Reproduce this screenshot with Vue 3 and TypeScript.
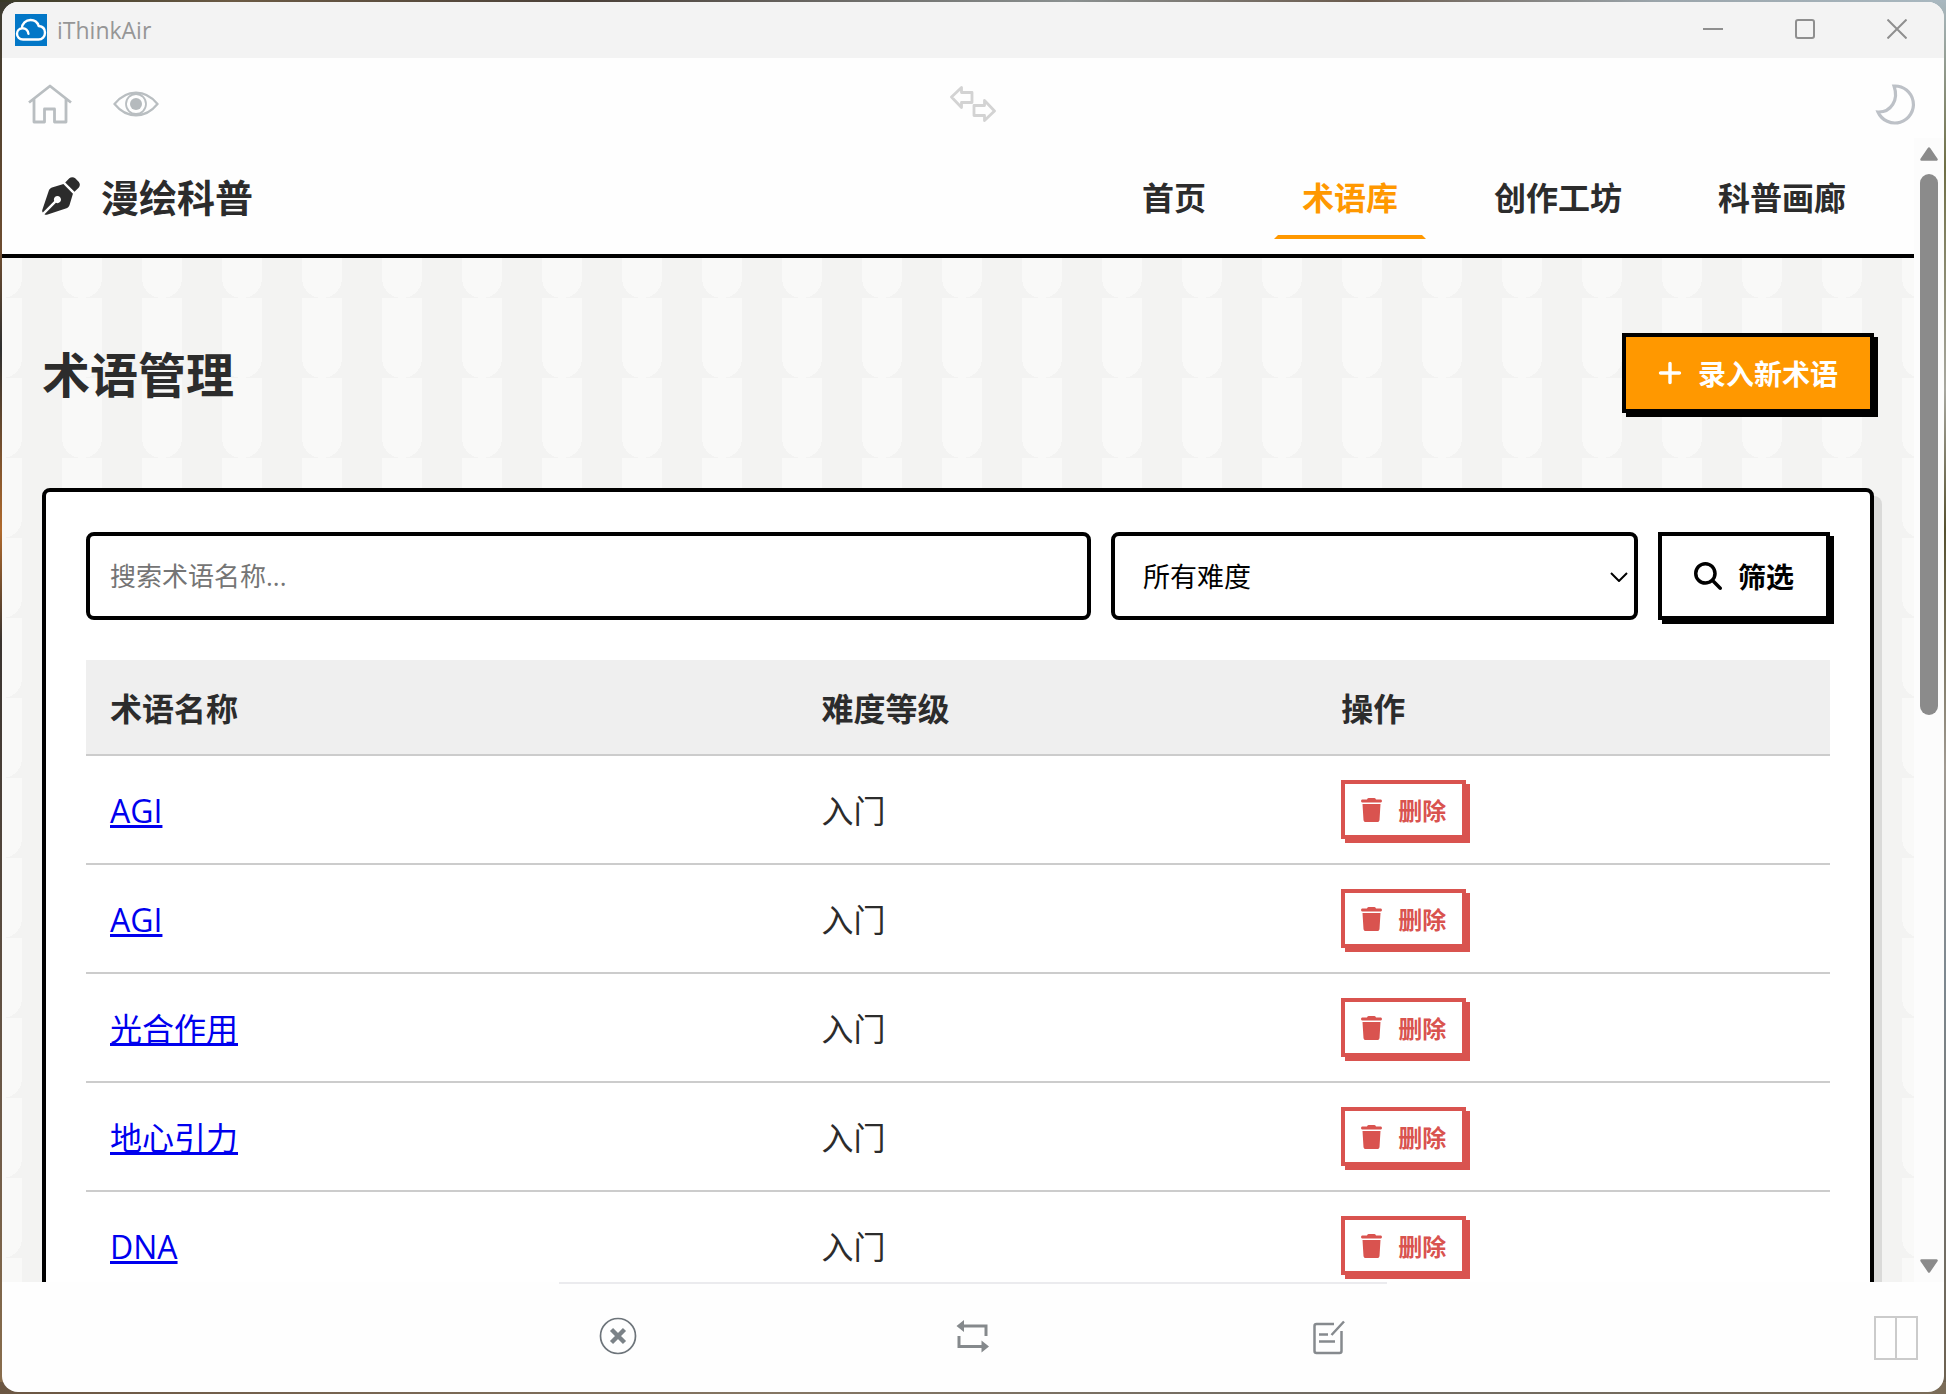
<script setup lang="ts">
import { ref } from 'vue'

interface Term {
  id: number
  name: string
  level: string
}

interface NavItem {
  label: string
  active?: boolean
}

const navItems: NavItem[] = [
  { label: '首页' },
  { label: '术语库', active: true },
  { label: '创作工坊' },
  { label: '科普画廊' },
]

const terms = ref<Term[]>([
  { id: 1, name: 'AGI', level: '入门' },
  { id: 2, name: 'AGI', level: '入门' },
  { id: 3, name: '光合作用', level: '入门' },
  { id: 4, name: '地心引力', level: '入门' },
  { id: 5, name: 'DNA', level: '入门' },
])

const keyword = ref('')
const level = ref('')

function removeTerm(id: number) {
  terms.value = terms.value.filter((t) => t.id !== id)
}
</script>

<template>
  <div class="desktop">
    <div class="window">
      <div class="titlebar">
        <svg class="app-icon" viewBox="0 0 32 32" aria-hidden="true">
          <rect width="32" height="32" fill="#0277c7" />
          <path
            d="M8 25.500C4.500 25.500 2 23 2 19.800C2 16.800 4.200 14.600 7 14.300C7 9.500 10.800 6 15.500 6C19.500 6 22.600 8.300 23.700 12C27.600 12.400 30 15 30 18.700C30 22.600 27.200 25.500 23.500 25.500ZM7 14.300C10.500 14 13.200 16.400 13.400 19.800"
            fill="none" stroke="#fff" stroke-width="2.400" stroke-linecap="round"
          />
        </svg>
        <span class="app-name">iThinkAir</span>
        <div class="window-controls">
          <button type="button" aria-label="最小化">
            <svg viewBox="0 0 20 20"><path d="M0 10H20" /></svg>
          </button>
          <button type="button" aria-label="最大化">
            <svg viewBox="0 0 20 20"><rect x="1" y="1" width="18" height="18" rx="2" /></svg>
          </button>
          <button type="button" aria-label="关闭">
            <svg viewBox="0 0 20 20"><path d="M0.500 0.500L19.500 19.500M19.500 0.500L0.500 19.500" /></svg>
          </button>
        </div>
      </div>

      <div class="toolbar">
        <div class="tools">
          <button type="button" aria-label="主页">
            <svg width="46" height="40" viewBox="0 0 46 40">
              <path d="M2 18.500L23 2L44 18.500M7 15V38H17.500V25H27.500V38H39V15" stroke="#b9bec1" stroke-width="2.800" fill="none" stroke-linejoin="round" />
            </svg>
          </button>
          <button type="button" aria-label="预览">
            <svg width="46" height="26" viewBox="0 0 46 26">
              <path d="M1.500 13C8 5 15 1.700 23 1.700S38 5 44.500 13C38 21 31 24.300 23 24.300S8 21 1.500 13Z" fill="none" stroke="#b9bec1" stroke-width="2.200" />
              <circle cx="23" cy="13" r="10" fill="none" stroke="#b9bec1" stroke-width="1.800" />
              <circle cx="23" cy="13" r="6" fill="#b5babd" />
            </svg>
          </button>
        </div>
        <button type="button" aria-label="切换">
          <svg width="46" height="36" viewBox="0 0 46 36">
            <path d="M1.500 11L11.500 1.500V6.500H22V16.500H11.500V21.500ZM44.500 25L34.500 34.500V29.500H24V19.500H34.500V14.500Z" fill="none" stroke="#d3d3d3" stroke-width="2.800" stroke-linejoin="round" />
          </svg>
        </button>
        <button type="button" aria-label="夜间模式">
          <svg width="44" height="46" viewBox="0 -2 44 46">
            <path d="M20 3A18.500 18.500 0 1 1 4 29C17 29.500 25 17 20 3Z" fill="none" stroke="#bdc1c7" stroke-width="3.200" />
          </svg>
        </button>
      </div>

      <div class="viewport">
        <div class="page">
          <header class="site-header">
            <a class="brand" href="#">
              <svg class="brand-icon" viewBox="0 0 512 512" aria-hidden="true">
                <path fill="currentColor" d="M368.400 18.300L312.700 74.100 437.900 199.300l55.700-55.700c21.900-21.900 21.900-57.300 0-79.200L447.600 18.300c-21.900-21.900-57.300-21.900-79.200 0zM288 94.600l-9.200 2.800L134.700 140.600c-19.900 6-35.700 21.200-42.300 41L3.800 445.800c-3.800 11.300-1 23.900 7.300 32.400L164.700 324.700c-3-6.300-4.700-13.300-4.700-20.700c0-26.500 21.500-48 48-48s48 21.500 48 48s-21.500 48-48 48c-7.400 0-14.400-1.700-20.700-4.700L33.700 500.900c8.600 8.300 21.100 11.200 32.400 7.300l264.300-88.600c19.700-6.600 35-22.400 41-42.300l43.200-144.100 2.800-9.200L288 94.600z" />
              </svg>
              <span>漫绘科普</span>
            </a>
            <nav class="site-nav">
              <a v-for="item in navItems" :key="item.label" href="#" :class="{ active: item.active }">{{ item.label }}</a>
            </nav>
          </header>

          <main class="content">
            <div class="page-head">
              <h1>术语管理</h1>
              <button type="button" class="btn btn-primary">
                <svg width="24" height="28" viewBox="0 0 448 512" aria-hidden="true">
                  <path fill="currentColor" d="M256 80c0-17.700-14.300-32-32-32s-32 14.300-32 32V224H48c-17.700 0-32 14.300-32 32s14.300 32 32 32H192V432c0 17.700 14.300 32 32 32s32-14.300 32-32V288H400c17.700 0 32-14.300 32-32s-14.300-32-32-32H256V80z" />
                </svg>
                <span>录入新术语</span>
              </button>
            </div>

            <section class="card">
              <form class="filters" @submit.prevent>
                <input v-model="keyword" type="text" placeholder="搜索术语名称..." aria-label="搜索术语名称" />
                <div class="select-wrap">
                  <select v-model="level" aria-label="难度">
                    <option value="">所有难度</option>
                    <option value="1">入门</option>
                  </select>
                  <svg viewBox="0 0 18 10" aria-hidden="true"><path d="M1 1L9 9L17 1" fill="none" stroke="#000" stroke-width="2" /></svg>
                </div>
                <button type="submit" class="btn">
                  <svg width="28" height="28" viewBox="0 0 512 512" aria-hidden="true">
                    <path fill="currentColor" d="M416 208c0 45.900-14.900 88.300-40 122.700L502.600 457.400c12.500 12.500 12.500 32.800 0 45.300s-32.800 12.500-45.300 0L330.700 376c-34.400 25.200-76.800 40-122.700 40C93.100 416 0 322.900 0 208S93.100 0 208 0S416 93.100 416 208zM208 352a144 144 0 1 0 0-288 144 144 0 1 0 0 288z" />
                  </svg>
                  <span>筛选</span>
                </button>
              </form>

              <table class="terms">
                <colgroup>
                  <col class="col-name" />
                  <col class="col-level" />
                  <col />
                </colgroup>
                <thead>
                  <tr>
                    <th scope="col">术语名称</th>
                    <th scope="col">难度等级</th>
                    <th scope="col">操作</th>
                  </tr>
                </thead>
                <tbody>
                  <tr v-for="term in terms" :key="term.id">
                    <td><a href="#">{{ term.name }}</a></td>
                    <td>{{ term.level }}</td>
                    <td class="actions">
                      <button type="button" class="btn btn-danger" @click="removeTerm(term.id)">
                        <svg width="21" height="24" viewBox="0 0 448 512" aria-hidden="true">
                          <path fill="currentColor" d="M135.200 17.700L128 32H32C14.300 32 0 46.300 0 64S14.300 96 32 96H416c17.700 0 32-14.300 32-32s-14.300-32-32-32H320l-7.200-14.300C307.400 6.800 296.300 0 284.200 0H163.800c-12.100 0-23.200 6.800-28.600 17.700zM416 128H32L53.200 467c1.600 25.300 22.600 45 47.900 45H346.900c25.300 0 46.300-19.700 47.900-45L416 128z" />
                        </svg>
                        <span>删除</span>
                      </button>
                    </td>
                  </tr>
                </tbody>
              </table>
            </section>
          </main>
        </div>

        <div class="scrollbar" aria-hidden="true">
          <svg viewBox="0 0 18 14"><path d="M9 1.500L16.500 12.500H1.500Z" fill="#8b8b8b" stroke="#8b8b8b" stroke-width="2.500" stroke-linejoin="round" /></svg>
          <div class="track"><div class="thumb"></div></div>
          <svg viewBox="0 0 18 14"><path d="M9 12.500L16.500 1.500H1.500Z" fill="#8b8b8b" stroke="#8b8b8b" stroke-width="2.500" stroke-linejoin="round" /></svg>
        </div>
      </div>

      <footer class="bottombar">
        <div class="bottom-actions">
          <button type="button" aria-label="取消">
            <svg width="38" height="38" viewBox="0 0 38 38">
              <circle cx="19" cy="19" r="17.500" fill="none" stroke="#6d747a" stroke-width="1.700" />
              <path d="M12.500 12.500L25.500 25.500M25.500 12.500L12.500 25.500" stroke="#7b8287" stroke-width="4.400" />
            </svg>
          </button>
          <button type="button" aria-label="循环">
            <svg width="34" height="34" viewBox="0 0 34 34">
              <path d="M7 7H30V17M3 17V27.500H26" fill="none" stroke="#85898c" stroke-width="3" />
              <path d="M0.500 7L8 1V13ZM33 27.500L25.500 21.500V33.500Z" fill="#85898c" />
            </svg>
          </button>
          <button type="button" aria-label="编辑">
            <svg width="36" height="38" viewBox="-2 -2 36 38">
              <path d="M22 5H4.500Q2.500 5 2.500 7V32Q2.500 34 4.500 34H27.500Q29.500 34 29.500 32V12M32 2.500L19.500 16M7 15.500H16M7 22.500H23" fill="none" stroke="#868a8e" stroke-width="2.500" />
            </svg>
          </button>
        </div>
        <button type="button" class="split" aria-label="分栏">
          <svg width="44" height="44" viewBox="0 0 44 44">
            <path d="M1 1H43V43H1ZM22 1V43" fill="none" stroke="#cbcbcb" stroke-width="2" />
          </svg>
        </button>
      </footer>
    </div>
  </div>
</template>

<style>
body {
  margin: 0;
}
</style>

<style scoped>
* {
  box-sizing: border-box;
}

.desktop {
  height: 100vh;
  padding: 2px;
  background:
    linear-gradient(90deg, #3a3a28, #6b5a44 12%, #4a4038 30%, #8a9090 55%, #6a5a4c 70%, #9aa4aa 85%, #a9b8c0) top / 100% 2px no-repeat,
    linear-gradient(90deg, #6b5642, #857663 40%, #6f6a62 70%, #7a6c58) bottom / 100% 12px no-repeat,
    linear-gradient(#3c3a30, #6e4d30 18%, #2f3030 25%, #b06a2c 38%, #3a3430 46%, #6d5a48 80%, #8a6e4c) left / 50% 100% no-repeat,
    linear-gradient(#a9b8c0, #6f6f45 12%, #a8a8a0 28%, #55502e 38%, #a09a92 55%, #7d8890 70%, #6c604e) right / 50% 100% no-repeat;
  font-family: "Open Sans", "Noto Sans CJK SC", sans-serif;
  color: #2c2c2c;
}

button {
  font: inherit;
  cursor: pointer;
}

svg {
  display: block;
  flex: none;
}

.window {
  display: flex;
  flex-direction: column;
  height: 100%;
  border-radius: 16px;
  overflow: hidden;
  background: #fefefe;
}

.titlebar {
  flex: none;
  display: flex;
  align-items: center;
  height: 56px;
  padding: 0 1px 0 13px;
  background: #f3f3f3;
}

.app-icon {
  width: 32px;
  height: 32px;
}

.app-name {
  margin-left: 10px;
  font-size: 23px;
  line-height: 32px;
  color: #969696;
}

.window-controls {
  display: flex;
  margin-left: auto;
}

.window-controls button {
  display: grid;
  place-items: center;
  width: 92px;
  height: 56px;
  padding: 0 0 2px;
  border: 0;
  background: none;
}

.window-controls svg {
  width: 20px;
  height: 20px;
  fill: none;
  stroke: #8f8f8f;
  stroke-width: 2;
}

.toolbar {
  flex: none;
  display: grid;
  grid-template-columns: 1fr auto 1fr;
  align-items: center;
  height: 80px;
  padding: 12px 26px 0 25px;
}

.toolbar button {
  justify-self: end;
  padding: 0;
  border: 0;
  background: none;
}

.tools {
  display: flex;
  align-items: center;
  gap: 40px;
}

.viewport {
  flex: 1;
  display: flex;
  min-height: 0;
}

.page {
  flex: 1;
  min-width: 0;
  overflow: hidden;
}

.site-header {
  display: flex;
  align-items: center;
  justify-content: space-between;
  height: 120px;
  padding: 0 40px;
  border-bottom: 4px solid #000;
}

.brand {
  display: flex;
  align-items: center;
  gap: 21px;
  font-size: 38px;
  font-weight: 700;
  line-height: 56px;
  color: inherit;
  text-decoration: none;
}

.brand span {
  padding-top: 2px;
}

.brand-icon {
  width: 38px;
  height: 38px;
}

.site-nav {
  display: flex;
  gap: 40px;
}

.site-nav a {
  padding: 18px 24px 14px;
  border: 4px solid transparent;
  font-size: 32px;
  font-weight: 700;
  line-height: 46px;
  color: inherit;
  text-decoration: none;
}

.site-nav a.active {
  border-bottom-color: #ff9800;
  color: #ff9800;
}

.content {
  padding: 75px 40px;
  background-color: #f3f3f2;
  background-image:
    radial-gradient(circle 20px at 40px 60px, #f9f9f8 100%, transparent),
    linear-gradient(to top, #f3f3f2 20px, transparent 20px),
    linear-gradient(90deg, #f3f3f2 20px, #f9f9f8 20px, #f9f9f8 60px, #f3f3f2 60px);
  background-size: 80px 80px;
  background-position: 40px 40px;
}

.page-head {
  display: flex;
  align-items: center;
  justify-content: space-between;
  margin-bottom: 75px;
}

h1 {
  margin: 0;
  padding-top: 4px;
  font-size: 48px;
  line-height: 72px;
}

.btn {
  display: inline-flex;
  align-items: center;
  gap: 16px;
  padding: 16px 32px;
  border: 4px solid #000;
  background: #fff;
  box-shadow: 4px 4px 0 #000;
  font-size: 28px;
  font-weight: 700;
  line-height: 38px;
  color: #000;
}

.btn span {
  padding-top: 2px;
}

.btn-primary {
  background: #ff9800;
  color: #fff;
}

.btn-danger {
  display: flex;
  padding: 8px 16px;
  border-color: #d9534f;
  box-shadow: 4px 4px 0 #d9534f;
  font-size: 24px;
  line-height: 33px;
  color: #d9534f;
}

.card {
  padding: 40px;
  border: 4px solid #000;
  border-radius: 8px;
  background: #fff;
  box-shadow: 8px 8px 0 rgba(0, 0, 0, 0.1);
}

.filters {
  display: grid;
  grid-template-columns: minmax(0, 1005fr) minmax(0, 527fr) auto;
  gap: 20px;
  height: 88px;
  margin-bottom: 40px;
}

.filters input,
.filters select {
  width: 100%;
  height: 88px;
  border: 4px solid #000;
  border-radius: 8px;
  background: #fff;
  font-family: inherit;
  font-size: 27px;
  color: #000;
}

.filters input {
  padding: 0 20px;
  font-size: 26px;
}

.filters input::placeholder {
  color: #757575;
}

.select-wrap {
  position: relative;
}

.filters select {
  appearance: none;
  padding: 0 40px 0 28px;
}

.select-wrap svg {
  position: absolute;
  top: 40px;
  right: 10px;
  width: 18px;
  height: 10px;
  pointer-events: none;
}

.terms {
  width: 100%;
  border-collapse: separate;
  border-spacing: 0;
  table-layout: fixed;
  font-size: 32px;
  line-height: 46px;
}

.col-name {
  width: 40.8%;
}

.col-level {
  width: 29.8%;
}

.terms th,
.terms td {
  padding: 26px 24px 24px;
  border-bottom: 2px solid #ccc;
  text-align: left;
}

.terms th {
  padding-bottom: 22px;
  background: #efefef;
}

.terms .actions {
  padding-top: 24px;
}

.terms td a {
  color: #0000ee;
}

.scrollbar {
  flex: none;
  display: flex;
  flex-direction: column;
  gap: 13px;
  width: 30px;
  padding: 9px 6px;
  background: #fcfcfc;
}

.scrollbar svg {
  width: 18px;
  height: 14px;
}

.track {
  flex: 1;
}

.thumb {
  height: 50.5%;
  border-radius: 9px;
  background: #8b8b8b;
}

.bottombar {
  flex: none;
  display: grid;
  grid-template-columns: 1fr 828px 1fr;
  height: 110px;
}

.bottombar button {
  display: grid;
  place-items: center;
  padding: 0;
  border: 0;
  background: none;
}

.bottom-actions {
  grid-column: 2;
  display: flex;
  justify-content: space-between;
  border-top: 2px solid #ebebee;
}

.bottom-actions button {
  width: 118px;
  padding-bottom: 4px;
}

.bottombar .split {
  justify-self: end;
  margin-right: 26px;
  padding-top: 2px;
}
</style>
